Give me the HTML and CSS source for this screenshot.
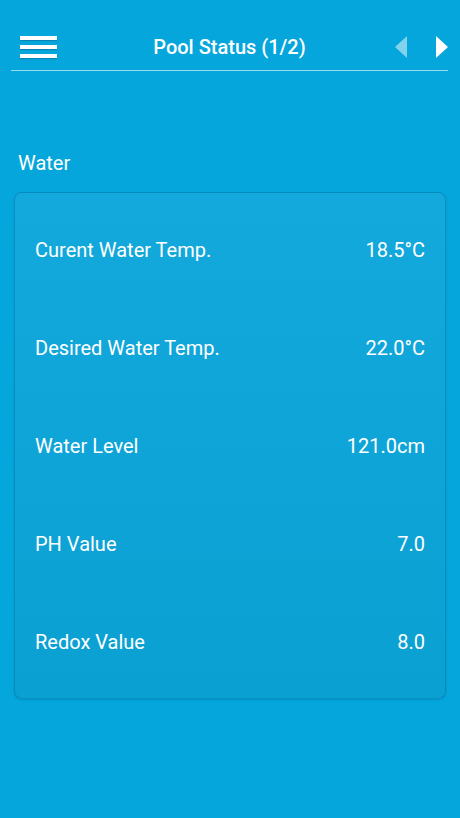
FILE: index.html
```html
<!DOCTYPE html>
<html lang="en">
<head>
<meta charset="UTF-8">
<meta name="viewport" content="width=device-width, initial-scale=1.0">
<title>Pool Status</title>
<link rel="stylesheet" href="styles.css">
</head>
<body>
<div class="app">
    <div class="topbar">
        <div class="menu">
            <span></span>
            <span></span>
            <span></span>
        </div>
        <h1 class="title">Pool Status (1/2)</h1>
        <div class="arrows">
            <svg class="arrow off" width="12" height="22" viewBox="0 0 12 22"><polygon points="12,0 12,22 0,11" fill="#fff"/></svg>
            <svg class="arrow" width="12" height="22" viewBox="0 0 12 22"><polygon points="0,0 0,22 12,11" fill="#fff"/></svg>
        </div>
    </div>

    <div class="section">
        <div class="label">Water</div>
        <div class="card">
            <div class="row"><span>Curent Water Temp.</span><span>18.5°C</span></div>
            <div class="row"><span>Desired Water Temp.</span><span>22.0°C</span></div>
            <div class="row"><span>Water Level</span><span>121.0cm</span></div>
            <div class="row"><span>PH Value</span><span>7.0</span></div>
            <div class="row"><span>Redox Value</span><span>8.0</span></div>
        </div>
    </div>
</div>
</body>
</html>
```

FILE: styles.css
```css
body {
    margin: 0;
    padding: 0;
    background-color: #04a6dc;
    font-family: Roboto, "Liberation Sans", Arial, sans-serif;
    color: #fff;
}
.app {
    width: 460px;
    height: 818px;
}
.topbar {
    display: grid;
    grid-template-columns: 1fr auto 1fr;
    align-items: center;
    margin: 0 12px 0 11px;
    height: 71px;
    padding-top: 24px;
    border-bottom: 1px solid rgba(255, 255, 255, 0.6);
    box-sizing: border-box;
}
.menu {
    display: flex;
    flex-direction: column;
    gap: 5px;
    width: 37px;
    margin-left: 9px;
}
.menu span {
    display: block;
    height: 4px;
    background-color: #fff;
    box-shadow: 0 1px 1px rgba(0, 60, 100, 0.35);
}
.title {
    margin: 0;
    font-size: 20px;
    font-weight: 500;
}
.arrows {
    display: flex;
    justify-content: flex-end;
    gap: 29px;
    align-items: center;
}
.arrow.off {
    opacity: 0.5;
}
.section {
    padding: 80px 14px 0 14px;
}
.label {
    font-size: 20px;
    padding-left: 4px;
    height: 30px;
    line-height: 24px;
    margin-bottom: 11px;
}
.card {
    border-radius: 8px;
    background: linear-gradient(#13a9dd, #0aa0d2);
    border: 1px solid rgba(0, 90, 140, 0.3);
    box-shadow: 0 1px 2px rgba(0, 60, 100, 0.2);
    padding: 8px 20px 7px 20px;
}
.row {
    display: flex;
    justify-content: space-between;
    align-items: center;
    height: 98px;
    font-size: 20px;
}
```
